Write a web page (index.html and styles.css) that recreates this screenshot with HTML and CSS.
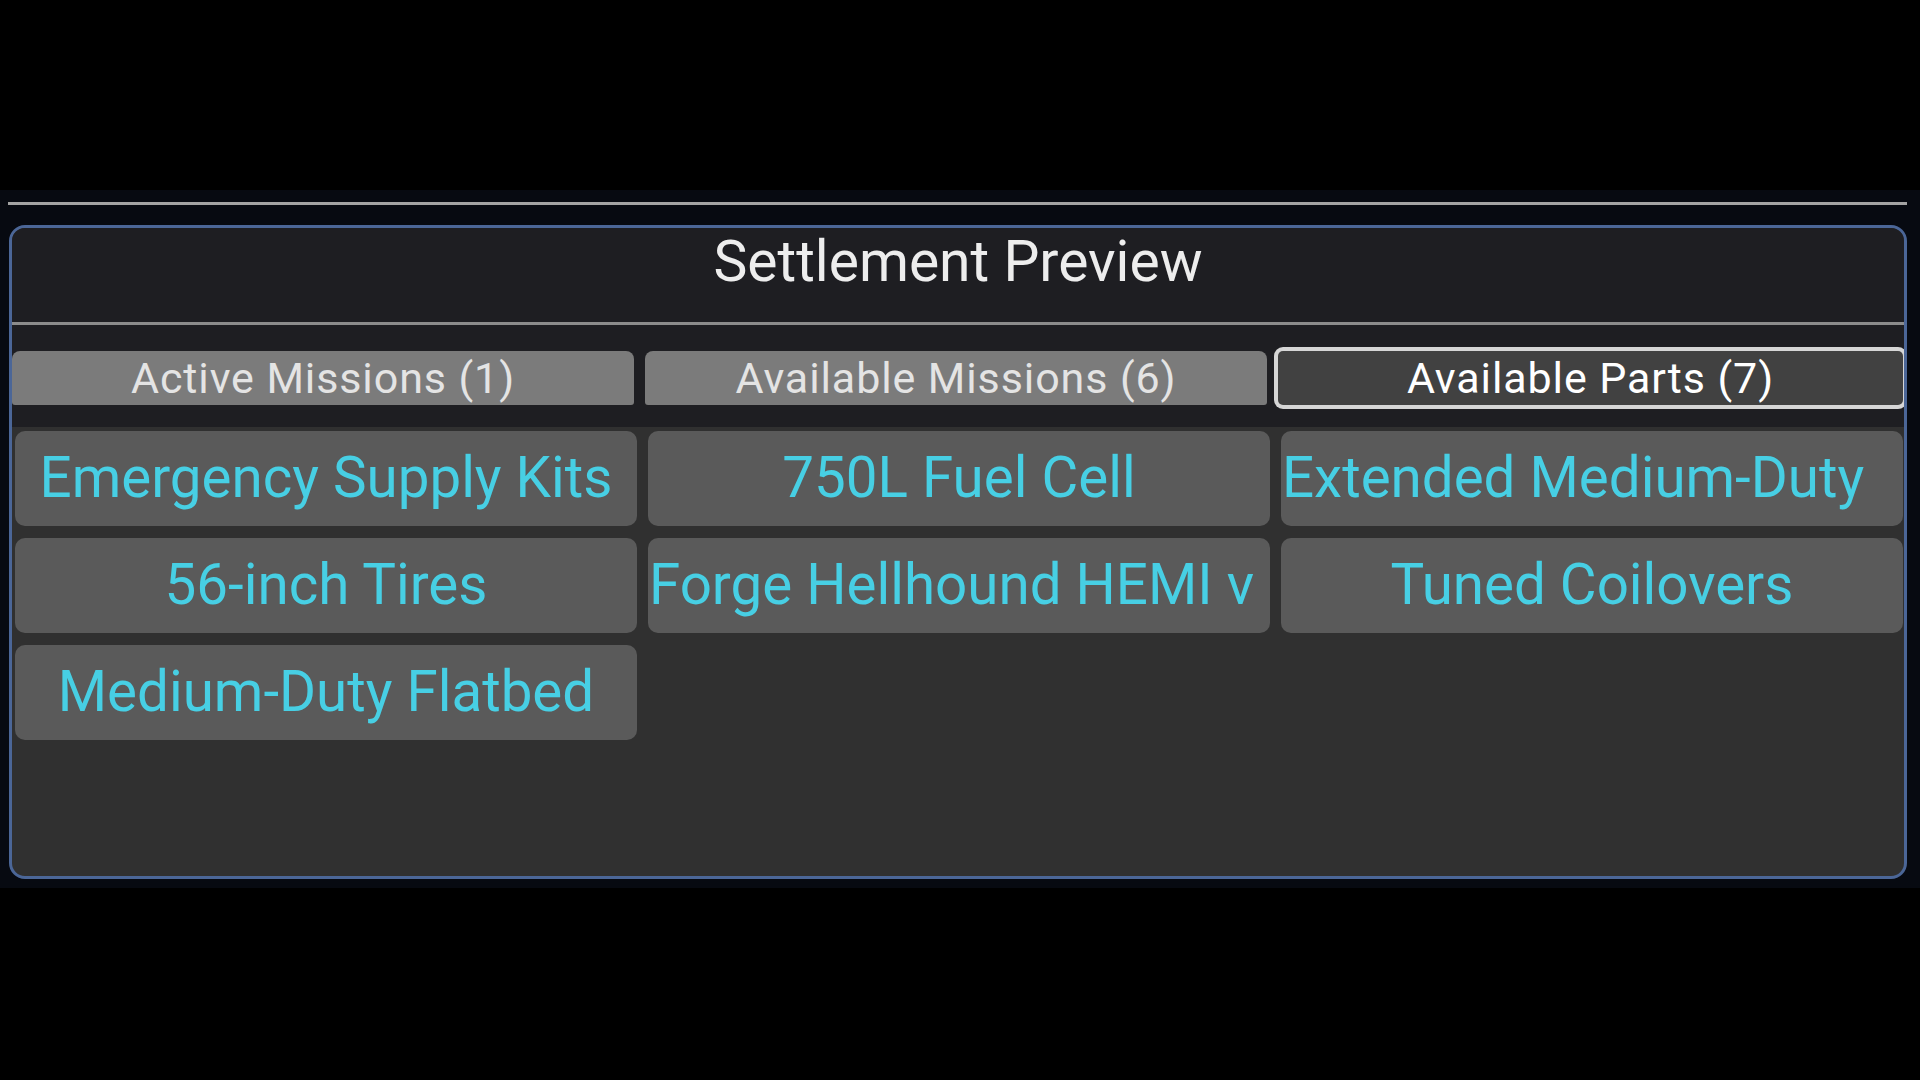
FILE: index.html
```html
<!DOCTYPE html>
<html lang="en">
<head>
<meta charset="utf-8">
<title>Settlement Preview</title>
<link rel="stylesheet" href="styles.css">
</head>
<body>
<div class="stage">
  <div class="rule"></div>
  <section class="panel">
    <header class="panel-head">
      <h1 class="panel-title">Settlement Preview</h1>
    </header>
    <nav class="tabs">
      <div class="tab">Active Missions (1)</div>
      <div class="tab">Available Missions (6)</div>
      <div class="tab tab-active">Available Parts (7)</div>
    </nav>
    <div class="items">
      <div class="item"><span class="item-label">Emergency Supply Kits</span></div>
      <div class="item"><span class="item-label">750L Fuel Cell</span></div>
      <div class="item item-overflow"><span class="item-label">Extended Medium-Duty</span></div>
      <div class="item"><span class="item-label">56-inch Tires</span></div>
      <div class="item item-overflow"><span class="item-label">Forge Hellhound HEMI v</span></div>
      <div class="item"><span class="item-label">Tuned Coilovers</span></div>
      <div class="item"><span class="item-label">Medium-Duty Flatbed</span></div>
    </div>
  </section>
</div>
</body>
</html>
```
FILE: styles.css
```css
* { box-sizing: border-box; }

html, body {
  margin: 0;
  padding: 0;
  width: 1920px;
  height: 1080px;
  background: #000;
  overflow: hidden;
  font-family: Roboto, "Noto Sans", "Liberation Sans", sans-serif;
}

.stage {
  margin-top: 190px;
  height: 698px;
  background: #070a11;
  padding: 12px 13px 9px 8px;
  display: flex;
  flex-direction: column;
}

.rule {
  height: 3px;
  background: #a3a3a3;
  margin-bottom: 20px;
  flex: none;
}

.panel {
  flex: 1;
  margin: 0 0 0 1px;
  border: 3px solid #4b6697;
  border-radius: 16px;
  background: #303030;
  overflow: hidden;
  display: flex;
  flex-direction: column;
}

.panel-head {
  height: 97px;
  flex: none;
  background: #1e1e22;
  border-bottom: 3px solid #8c8c8c;
  padding-top: 1px;
  text-align: center;
}

.panel-title {
  margin: 0;
  font-weight: 400;
  font-size: 57px;
  line-height: 66px;
  color: #ededed;
}

.tabs {
  flex: none;
  background: #1e1e22;
  padding: 26px 0 22px 0;
  display: grid;
  grid-template-columns: 622px 622px 625px;
  column-gap: 11px;
}

.tab {
  height: 54px;
  background: #7b7b7b;
  border-radius: 8px 8px 3px 3px;
  color: #e4e4e4;
  font-size: 43px;
  letter-spacing: 0.9px;
  display: flex;
  align-items: center;
  justify-content: center;
  white-space: nowrap;
}

.tab-active {
  background: #414141;
  color: #ffffff;
  border-radius: 5px;
  box-shadow: 0 0 0 4px #d6d6d6;
}

.items {
  flex: 1;
  padding: 4px 1px 0 3px;
  display: grid;
  grid-template-columns: repeat(3, 1fr);
  grid-auto-rows: 95px;
  column-gap: 11px;
  row-gap: 12px;
  align-content: start;
}

.item {
  background: #5a5a5a;
  border-radius: 10px;
  display: flex;
  align-items: center;
  justify-content: center;
  overflow: hidden;
  white-space: nowrap;
}

.item-overflow {
  justify-content: flex-start;
  padding-left: 1px;
}

.item-label {
  color: #47cfe4;
  font-size: 56.5px;
  line-height: 1;
}
```
